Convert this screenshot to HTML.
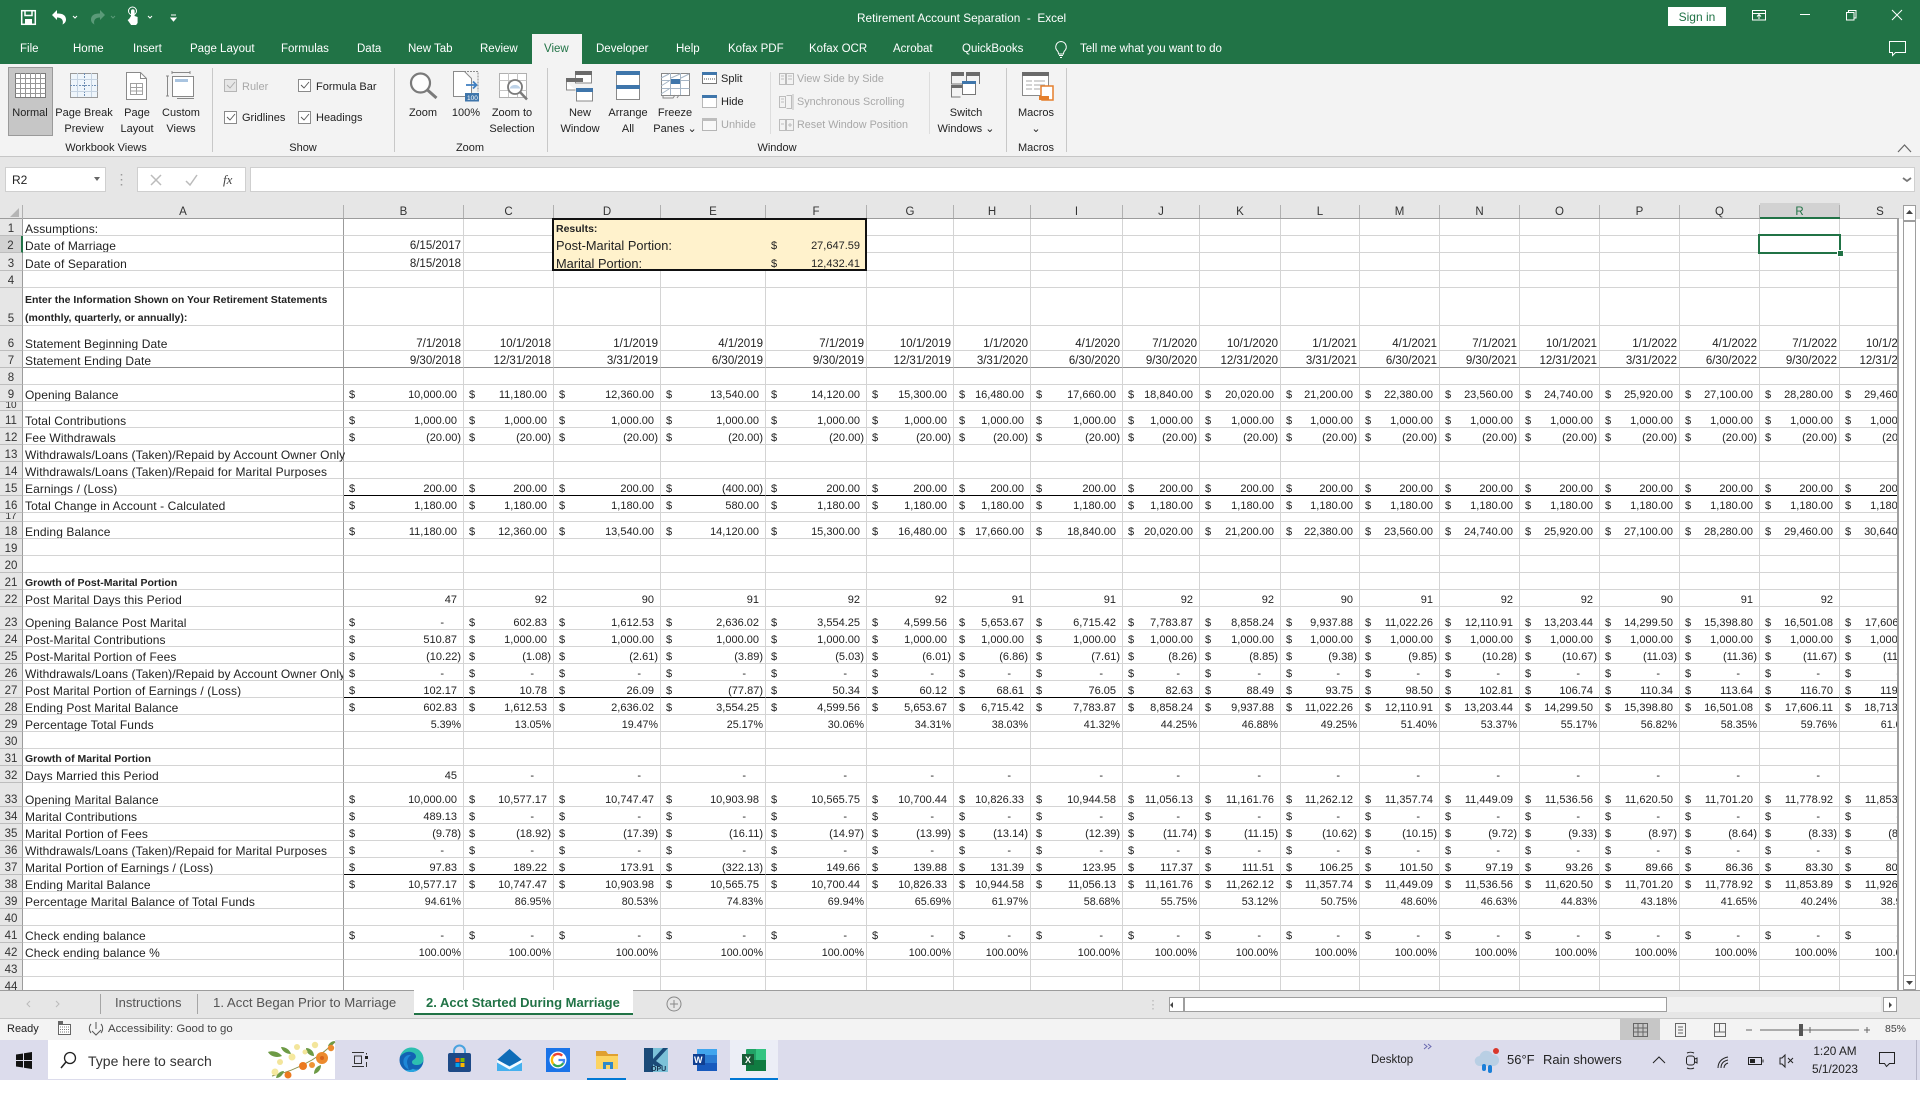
<!DOCTYPE html>
<html lang="en"><head><meta charset="utf-8"><title>Retirement Account Separation - Excel</title>
<style>
html,body{margin:0;padding:0;background:#fff}
body{width:1920px;height:1100px;position:relative;overflow:hidden;font-family:"Liberation Sans",sans-serif;color:#222}
.a,.t,.c{position:absolute}
.t,.c{white-space:nowrap;line-height:16px;font-size:11px}
.c{transform:translateX(-50%);text-align:center}
.w{color:#fff;font-size:11.5px}
.f{color:#a8a8a8}
.cb{position:absolute;width:11px;height:11px;border:1px solid #8a8a8a;background:#fff}
.sep{position:absolute;top:68px;width:1px;height:84px;background:#c8c8c8}
.ch{position:absolute;top:205px;height:13px;border-right:1px solid #b0b0b0;text-align:center;font-size:11.5px;line-height:14px;color:#333}
#g{position:absolute;left:0;top:219px;width:1899px;height:771px;overflow:hidden;background:#fff}
table{border-collapse:separate;border-spacing:0;table-layout:fixed;width:1920px}
td,th{box-sizing:border-box;padding:0;overflow:hidden;white-space:nowrap;vertical-align:bottom;line-height:12px;border-bottom:1px solid #d4d4d4}
td{border-right:1px solid #d4d4d4;text-align:right;padding:0 2px 0 5px;font-size:11px;color:#222}
th{background:#e6e6e6;border-right:1px solid #9c9c9c;border-bottom-color:#bdbdbd;font-weight:400;font-size:11.5px;color:#333;text-align:center}
td i{float:left;font-style:normal}
tr.n td{padding-right:6px}
tr.n td.p{padding-right:2px}
tr.n td.d{padding-right:19px}
tr.dt td{font-size:11.5px}
tr.pc td{font-size:10.7px}
tr td:nth-child(2),tr.dt td:nth-child(2),tr.pc td:nth-child(2){text-align:left;padding-left:2px;padding-right:0;font-size:12px;letter-spacing:.1px;border-right-color:#9b9b9b}
td b{font-size:10.5px;letter-spacing:0}
tr.g td{border-bottom-color:#8f8f8f}
tr.k td{border-bottom-color:#000}
tr.k td:nth-child(2){border-bottom-color:#d4d4d4}
td.y{background:#fff2cc;border-color:#fff2cc}
td.l,tr.dt td.l{text-align:left;font-size:12.8px;overflow:visible;padding-left:2px}
td.v,tr.dt td.v{font-size:11px;padding-right:6px}
td.o{overflow:visible}
.m{height:8px;line-height:8px;overflow:hidden;font-size:10px}
</style></head><body>

<!-- title bar + tabs -->
<div class="a" style="left:0;top:0;width:1920px;height:64px;background:#217346"></div>
<div class="a" style="left:532px;top:34px;width:50px;height:30px;background:#f3f3f3"></div>
<div class="t w" style="left:857px;top:10px;font-size:11.8px">Retirement Account Separation&nbsp; - &nbsp;Excel</div>
<div class="a" style="left:1668px;top:7px;width:58px;height:19px;background:#fff;color:#217346;font-size:12px;line-height:20px;text-align:center">Sign in</div>
<div class="t w" style="left:20px;top:41px">File</div>
<div class="t w" style="left:73px;top:41px">Home</div>
<div class="t w" style="left:133px;top:41px">Insert</div>
<div class="t w" style="left:190px;top:41px">Page Layout</div>
<div class="t w" style="left:281px;top:41px">Formulas</div>
<div class="t w" style="left:357px;top:41px">Data</div>
<div class="t w" style="left:408px;top:41px">New Tab</div>
<div class="t w" style="left:480px;top:41px">Review</div>
<div class="t" style="left:544px;top:41px;color:#217346;font-size:11.5px">View</div>
<div class="t w" style="left:596px;top:41px">Developer</div>
<div class="t w" style="left:676px;top:41px">Help</div>
<div class="t w" style="left:728px;top:41px">Kofax PDF</div>
<div class="t w" style="left:809px;top:41px">Kofax OCR</div>
<div class="t w" style="left:893px;top:41px">Acrobat</div>
<div class="t w" style="left:962px;top:41px">QuickBooks</div>
<div class="t w" style="left:1080px;top:41px">Tell me what you want to do</div>

<!-- ribbon -->
<div class="a" style="left:0;top:64px;width:1920px;height:92px;background:#f3f3f3;border-bottom:1px solid #c6c6c6"></div>
<div class="a" style="left:8px;top:67px;width:43px;height:67px;background:#c6c6c6;border:1px solid #9a9a9a"></div>
<div class="sep" style="left:212px"></div><div class="sep" style="left:394px"></div><div class="sep" style="left:547px"></div>
<div class="sep" style="left:770px;height:62px;top:72px;background:#ddd"></div><div class="sep" style="left:929px;height:62px;top:72px;background:#ddd"></div><div class="sep" style="left:1006px"></div><div class="sep" style="left:1066px"></div>

<div class="c" style="left:30px;top:105px">Normal</div>
<div class="c" style="left:84px;top:105px">Page Break<br>Preview</div>
<div class="c" style="left:137px;top:105px">Page<br>Layout</div>
<div class="c" style="left:181px;top:105px">Custom<br>Views</div>
<div class="c" style="left:106px;top:140px">Workbook Views</div>
<div class="t f" style="left:242px;top:79px">Ruler</div>
<div class="t" style="left:316px;top:79px">Formula Bar</div>
<div class="t" style="left:242px;top:110px">Gridlines</div>
<div class="t" style="left:316px;top:110px">Headings</div>
<div class="c" style="left:303px;top:140px">Show</div>
<div class="c" style="left:423px;top:105px">Zoom</div>
<div class="c" style="left:466px;top:105px">100%</div>
<div class="c" style="left:512px;top:105px">Zoom to<br>Selection</div>
<div class="c" style="left:470px;top:140px">Zoom</div>
<div class="c" style="left:580px;top:105px">New<br>Window</div>
<div class="c" style="left:628px;top:105px">Arrange<br>All</div>
<div class="c" style="left:675px;top:105px">Freeze<br>Panes&nbsp;⌄</div>
<div class="t" style="left:721px;top:71px">Split</div>
<div class="t" style="left:721px;top:94px">Hide</div>
<div class="t f" style="left:721px;top:117px">Unhide</div>
<div class="t f" style="left:797px;top:71px;font-size:10.8px">View Side by Side</div>
<div class="t f" style="left:797px;top:94px;font-size:10.8px">Synchronous Scrolling</div>
<div class="t f" style="left:797px;top:117px;font-size:10.8px">Reset Window Position</div>
<div class="c" style="left:777px;top:140px">Window</div>
<div class="c" style="left:966px;top:105px">Switch<br>Windows&nbsp;⌄</div>
<div class="c" style="left:1036px;top:105px">Macros<br>⌄</div>
<div class="c" style="left:1036px;top:140px">Macros</div>
<div class="cb" style="left:224px;top:79px;background:#e6e6e6;border-color:#b5b5b5"></div>
<div class="cb" style="left:298px;top:79px"></div><div class="cb" style="left:224px;top:111px"></div><div class="cb" style="left:298px;top:111px"></div>

<!-- formula band -->
<div class="a" style="left:0;top:157px;width:1920px;height:48px;background:#e6e6e6"></div>
<div class="a" style="left:5px;top:167px;width:101px;height:25px;background:#fff;border:1px solid #cfcfcf;box-sizing:border-box;font-size:12px;line-height:24px;padding-left:6px">R2</div>
<div class="a" style="left:137px;top:167px;width:109px;height:25px;background:#fff;border:1px solid #cfcfcf;box-sizing:border-box"></div>
<div class="a" style="left:250px;top:167px;width:1665px;height:25px;background:#fff;border:1px solid #cfcfcf;box-sizing:border-box"></div>
<div class="t" style="left:223px;top:172px;font-family:'Liberation Serif',serif;font-style:italic;font-size:13px;color:#444">fx</div>

<!-- column headers -->
<div class="a" style="left:0;top:203px;width:1920px;height:16px;background:#e6e6e6"></div>
<div class="a" style="left:1760px;top:203px;width:80px;height:15px;background:#d2d2d2"></div>
<div class="a" style="left:0;top:218px;width:1899px;height:1px;background:#9c9c9c"></div>
<div class="ch" style="left:23px;width:320px">A</div><div class="ch" style="left:344px;width:119px">B</div><div class="ch" style="left:464px;width:89px">C</div><div class="ch" style="left:554px;width:106px">D</div><div class="ch" style="left:661px;width:104px">E</div><div class="ch" style="left:766px;width:100px">F</div><div class="ch" style="left:867px;width:86px">G</div><div class="ch" style="left:954px;width:76px">H</div><div class="ch" style="left:1031px;width:91px">I</div><div class="ch" style="left:1123px;width:76px">J</div><div class="ch" style="left:1200px;width:80px">K</div><div class="ch" style="left:1281px;width:78px">L</div><div class="ch" style="left:1360px;width:79px">M</div><div class="ch" style="left:1440px;width:79px">N</div><div class="ch" style="left:1520px;width:79px">O</div><div class="ch" style="left:1600px;width:79px">P</div><div class="ch" style="left:1680px;width:79px">Q</div><div class="ch" style="left:1760px;width:79px;color:#217346">R</div><div class="ch" style="left:1840px;width:80px;border-right:0">S</div>
<div class="a" style="left:1760px;top:217px;width:80px;height:2px;background:#217346"></div>
<div class="a" style="left:22px;top:205px;width:1px;height:14px;background:#b0b0b0"></div>

<div id="g"><table>
<colgroup><col style="width:23px"><col style="width:321px"><col style="width:120px"><col style="width:90px"><col style="width:107px"><col style="width:105px"><col style="width:101px"><col style="width:87px"><col style="width:77px"><col style="width:92px"><col style="width:77px"><col style="width:81px"><col style="width:79px"><col style="width:80px"><col style="width:80px"><col style="width:80px"><col style="width:80px"><col style="width:80px"><col style="width:80px"><col style="width:80px"></colgroup>
<tr style="height:17px"><th>1<td>Assumptions:<td><td><td class="y l"><b>Results:</b><td class=y><td class=y><td><td><td><td><td><td><td><td><td><td><td><td><td>
<tr style="height:17px" class=dt><th style="background:#d2d2d2;border-right:2px solid #217346">2<td>Date of Marriage<td>6/15/2017<td><td class="y l">Post-Marital Portion:<td class=y><td class="y v"><i>$</i>27,647.59<td><td><td><td><td><td><td><td><td><td><td><td><td>
<tr style="height:18px" class=dt><th>3<td>Date of Separation<td>8/15/2018<td><td class="y l">Marital Portion:<td class=y><td class="y v"><i>$</i>12,432.41<td><td><td><td><td><td><td><td><td><td><td><td><td>
<tr style="height:17px"><th>4<td><td><td><td><td><td><td><td><td><td><td><td><td><td><td><td><td><td><td>
<tr style="height:38px"><th>5<td><div style="line-height:17px;position:relative;top:2px"><b>Enter the Information Shown on Your Retirement Statements<br>(monthly, quarterly, or annually):</b></div><td><td><td><td><td><td><td><td><td><td><td><td><td><td><td><td><td><td>
<tr style="height:25px" class=dt><th>6<td>Statement Beginning Date<td>7/1/2018<td>10/1/2018<td>1/1/2019<td>4/1/2019<td>7/1/2019<td>10/1/2019<td>1/1/2020<td>4/1/2020<td>7/1/2020<td>10/1/2020<td>1/1/2021<td>4/1/2021<td>7/1/2021<td>10/1/2021<td>1/1/2022<td>4/1/2022<td>7/1/2022<td>10/1/2022
<tr style="height:17px" class="dt g"><th>7<td>Statement Ending Date<td>9/30/2018<td>12/31/2018<td>3/31/2019<td>6/30/2019<td>9/30/2019<td>12/31/2019<td>3/31/2020<td>6/30/2020<td>9/30/2020<td>12/31/2020<td>3/31/2021<td>6/30/2021<td>9/30/2021<td>12/31/2021<td>3/31/2022<td>6/30/2022<td>9/30/2022<td>12/31/2022
<tr style="height:17px"><th>8<td><td><td><td><td><td><td><td><td><td><td><td><td><td><td><td><td><td><td>
<tr style="height:17px" class=n><th>9<td>Opening Balance<td><i>$</i>10,000.00<td><i>$</i>11,180.00<td><i>$</i>12,360.00<td><i>$</i>13,540.00<td><i>$</i>14,120.00<td><i>$</i>15,300.00<td><i>$</i>16,480.00<td><i>$</i>17,660.00<td><i>$</i>18,840.00<td><i>$</i>20,020.00<td><i>$</i>21,200.00<td><i>$</i>22,380.00<td><i>$</i>23,560.00<td><i>$</i>24,740.00<td><i>$</i>25,920.00<td><i>$</i>27,100.00<td><i>$</i>28,280.00<td><i>$</i>29,460.00
<tr style="height:9px"><th><div class=m>10</div><td><td><td><td><td><td><td><td><td><td><td><td><td><td><td><td><td><td><td>
<tr style="height:17px" class=n><th>11<td>Total Contributions<td><i>$</i>1,000.00<td><i>$</i>1,000.00<td><i>$</i>1,000.00<td><i>$</i>1,000.00<td><i>$</i>1,000.00<td><i>$</i>1,000.00<td><i>$</i>1,000.00<td><i>$</i>1,000.00<td><i>$</i>1,000.00<td><i>$</i>1,000.00<td><i>$</i>1,000.00<td><i>$</i>1,000.00<td><i>$</i>1,000.00<td><i>$</i>1,000.00<td><i>$</i>1,000.00<td><i>$</i>1,000.00<td><i>$</i>1,000.00<td><i>$</i>1,000.00
<tr style="height:17px" class=n><th>12<td>Fee Withdrawals<td class=p><i>$</i>(20.00)<td class=p><i>$</i>(20.00)<td class=p><i>$</i>(20.00)<td class=p><i>$</i>(20.00)<td class=p><i>$</i>(20.00)<td class=p><i>$</i>(20.00)<td class=p><i>$</i>(20.00)<td class=p><i>$</i>(20.00)<td class=p><i>$</i>(20.00)<td class=p><i>$</i>(20.00)<td class=p><i>$</i>(20.00)<td class=p><i>$</i>(20.00)<td class=p><i>$</i>(20.00)<td class=p><i>$</i>(20.00)<td class=p><i>$</i>(20.00)<td class=p><i>$</i>(20.00)<td class=p><i>$</i>(20.00)<td class=p><i>$</i>(20.00)
<tr style="height:17px"><th>13<td class=o>Withdrawals/Loans (Taken)/Repaid by Account Owner Only<td><td><td><td><td><td><td><td><td><td><td><td><td><td><td><td><td><td>
<tr style="height:17px"><th>14<td>Withdrawals/Loans (Taken)/Repaid for Marital Purposes<td><td><td><td><td><td><td><td><td><td><td><td><td><td><td><td><td><td>
<tr style="height:17px" class="n k"><th>15<td>Earnings / (Loss)<td><i>$</i>200.00<td><i>$</i>200.00<td><i>$</i>200.00<td class=p><i>$</i>(400.00)<td><i>$</i>200.00<td><i>$</i>200.00<td><i>$</i>200.00<td><i>$</i>200.00<td><i>$</i>200.00<td><i>$</i>200.00<td><i>$</i>200.00<td><i>$</i>200.00<td><i>$</i>200.00<td><i>$</i>200.00<td><i>$</i>200.00<td><i>$</i>200.00<td><i>$</i>200.00<td><i>$</i>200.00
<tr style="height:17px" class=n><th>16<td>Total Change in Account - Calculated<td><i>$</i>1,180.00<td><i>$</i>1,180.00<td><i>$</i>1,180.00<td><i>$</i>580.00<td><i>$</i>1,180.00<td><i>$</i>1,180.00<td><i>$</i>1,180.00<td><i>$</i>1,180.00<td><i>$</i>1,180.00<td><i>$</i>1,180.00<td><i>$</i>1,180.00<td><i>$</i>1,180.00<td><i>$</i>1,180.00<td><i>$</i>1,180.00<td><i>$</i>1,180.00<td><i>$</i>1,180.00<td><i>$</i>1,180.00<td><i>$</i>1,180.00
<tr style="height:9px"><th><div class=m>17</div><td><td><td><td><td><td><td><td><td><td><td><td><td><td><td><td><td><td><td>
<tr style="height:17px" class=n><th>18<td>Ending Balance<td><i>$</i>11,180.00<td><i>$</i>12,360.00<td><i>$</i>13,540.00<td><i>$</i>14,120.00<td><i>$</i>15,300.00<td><i>$</i>16,480.00<td><i>$</i>17,660.00<td><i>$</i>18,840.00<td><i>$</i>20,020.00<td><i>$</i>21,200.00<td><i>$</i>22,380.00<td><i>$</i>23,560.00<td><i>$</i>24,740.00<td><i>$</i>25,920.00<td><i>$</i>27,100.00<td><i>$</i>28,280.00<td><i>$</i>29,460.00<td><i>$</i>30,640.00
<tr style="height:17px"><th>19<td><td><td><td><td><td><td><td><td><td><td><td><td><td><td><td><td><td><td>
<tr style="height:17px"><th>20<td><td><td><td><td><td><td><td><td><td><td><td><td><td><td><td><td><td><td>
<tr style="height:17px"><th>21<td><b>Growth of Post-Marital Portion</b><td><td><td><td><td><td><td><td><td><td><td><td><td><td><td><td><td><td>
<tr style="height:17px" class=n><th>22<td>Post Marital Days this Period<td>47<td>92<td>90<td>91<td>92<td>92<td>91<td>91<td>92<td>92<td>90<td>91<td>92<td>92<td>90<td>91<td>92<td>
<tr style="height:23px" class=n><th>23<td>Opening Balance Post Marital<td class=d><i>$</i>-<td><i>$</i>602.83<td><i>$</i>1,612.53<td><i>$</i>2,636.02<td><i>$</i>3,554.25<td><i>$</i>4,599.56<td><i>$</i>5,653.67<td><i>$</i>6,715.42<td><i>$</i>7,783.87<td><i>$</i>8,858.24<td><i>$</i>9,937.88<td><i>$</i>11,022.26<td><i>$</i>12,110.91<td><i>$</i>13,203.44<td><i>$</i>14,299.50<td><i>$</i>15,398.80<td><i>$</i>16,501.08<td><i>$</i>17,606.11
<tr style="height:17px" class=n><th>24<td>Post-Marital Contributions<td><i>$</i>510.87<td><i>$</i>1,000.00<td><i>$</i>1,000.00<td><i>$</i>1,000.00<td><i>$</i>1,000.00<td><i>$</i>1,000.00<td><i>$</i>1,000.00<td><i>$</i>1,000.00<td><i>$</i>1,000.00<td><i>$</i>1,000.00<td><i>$</i>1,000.00<td><i>$</i>1,000.00<td><i>$</i>1,000.00<td><i>$</i>1,000.00<td><i>$</i>1,000.00<td><i>$</i>1,000.00<td><i>$</i>1,000.00<td><i>$</i>1,000.00
<tr style="height:17px" class=n><th>25<td>Post-Marital Portion of Fees<td class=p><i>$</i>(10.22)<td class=p><i>$</i>(1.08)<td class=p><i>$</i>(2.61)<td class=p><i>$</i>(3.89)<td class=p><i>$</i>(5.03)<td class=p><i>$</i>(6.01)<td class=p><i>$</i>(6.86)<td class=p><i>$</i>(7.61)<td class=p><i>$</i>(8.26)<td class=p><i>$</i>(8.85)<td class=p><i>$</i>(9.38)<td class=p><i>$</i>(9.85)<td class=p><i>$</i>(10.28)<td class=p><i>$</i>(10.67)<td class=p><i>$</i>(11.03)<td class=p><i>$</i>(11.36)<td class=p><i>$</i>(11.67)<td class=p><i>$</i>(11.95)
<tr style="height:17px" class=n><th>26<td>Withdrawals/Loans (Taken)/Repaid by Account Owner Only<td class=d><i>$</i>-<td class=d><i>$</i>-<td class=d><i>$</i>-<td class=d><i>$</i>-<td class=d><i>$</i>-<td class=d><i>$</i>-<td class=d><i>$</i>-<td class=d><i>$</i>-<td class=d><i>$</i>-<td class=d><i>$</i>-<td class=d><i>$</i>-<td class=d><i>$</i>-<td class=d><i>$</i>-<td class=d><i>$</i>-<td class=d><i>$</i>-<td class=d><i>$</i>-<td class=d><i>$</i>-<td class=d><i>$</i>-
<tr style="height:17px" class="n k"><th>27<td>Post Marital Portion of Earnings / (Loss)<td><i>$</i>102.17<td><i>$</i>10.78<td><i>$</i>26.09<td class=p><i>$</i>(77.87)<td><i>$</i>50.34<td><i>$</i>60.12<td><i>$</i>68.61<td><i>$</i>76.05<td><i>$</i>82.63<td><i>$</i>88.49<td><i>$</i>93.75<td><i>$</i>98.50<td><i>$</i>102.81<td><i>$</i>106.74<td><i>$</i>110.34<td><i>$</i>113.64<td><i>$</i>116.70<td><i>$</i>119.24
<tr style="height:17px" class=n><th>28<td>Ending Post Marital Balance<td><i>$</i>602.83<td><i>$</i>1,612.53<td><i>$</i>2,636.02<td><i>$</i>3,554.25<td><i>$</i>4,599.56<td><i>$</i>5,653.67<td><i>$</i>6,715.42<td><i>$</i>7,783.87<td><i>$</i>8,858.24<td><i>$</i>9,937.88<td><i>$</i>11,022.26<td><i>$</i>12,110.91<td><i>$</i>13,203.44<td><i>$</i>14,299.50<td><i>$</i>15,398.80<td><i>$</i>16,501.08<td><i>$</i>17,606.11<td><i>$</i>18,713.40
<tr style="height:17px" class=pc><th>29<td>Percentage Total Funds<td>5.39%<td>13.05%<td>19.47%<td>25.17%<td>30.06%<td>34.31%<td>38.03%<td>41.32%<td>44.25%<td>46.88%<td>49.25%<td>51.40%<td>53.37%<td>55.17%<td>56.82%<td>58.35%<td>59.76%<td>61.07%
<tr style="height:17px"><th>30<td><td><td><td><td><td><td><td><td><td><td><td><td><td><td><td><td><td><td>
<tr style="height:17px"><th>31<td><b>Growth of Marital Portion</b><td><td><td><td><td><td><td><td><td><td><td><td><td><td><td><td><td><td>
<tr style="height:17px" class=n><th>32<td>Days Married this Period<td>45<td class=d>-<td class=d>-<td class=d>-<td class=d>-<td class=d>-<td class=d>-<td class=d>-<td class=d>-<td class=d>-<td class=d>-<td class=d>-<td class=d>-<td class=d>-<td class=d>-<td class=d>-<td class=d>-<td>
<tr style="height:24px" class=n><th>33<td>Opening Marital Balance<td><i>$</i>10,000.00<td><i>$</i>10,577.17<td><i>$</i>10,747.47<td><i>$</i>10,903.98<td><i>$</i>10,565.75<td><i>$</i>10,700.44<td><i>$</i>10,826.33<td><i>$</i>10,944.58<td><i>$</i>11,056.13<td><i>$</i>11,161.76<td><i>$</i>11,262.12<td><i>$</i>11,357.74<td><i>$</i>11,449.09<td><i>$</i>11,536.56<td><i>$</i>11,620.50<td><i>$</i>11,701.20<td><i>$</i>11,778.92<td><i>$</i>11,853.89
<tr style="height:17px" class=n><th>34<td>Marital Contributions<td><i>$</i>489.13<td class=d><i>$</i>-<td class=d><i>$</i>-<td class=d><i>$</i>-<td class=d><i>$</i>-<td class=d><i>$</i>-<td class=d><i>$</i>-<td class=d><i>$</i>-<td class=d><i>$</i>-<td class=d><i>$</i>-<td class=d><i>$</i>-<td class=d><i>$</i>-<td class=d><i>$</i>-<td class=d><i>$</i>-<td class=d><i>$</i>-<td class=d><i>$</i>-<td class=d><i>$</i>-<td class=d><i>$</i>-
<tr style="height:17px" class=n><th>35<td>Marital Portion of Fees<td class=p><i>$</i>(9.78)<td class=p><i>$</i>(18.92)<td class=p><i>$</i>(17.39)<td class=p><i>$</i>(16.11)<td class=p><i>$</i>(14.97)<td class=p><i>$</i>(13.99)<td class=p><i>$</i>(13.14)<td class=p><i>$</i>(12.39)<td class=p><i>$</i>(11.74)<td class=p><i>$</i>(11.15)<td class=p><i>$</i>(10.62)<td class=p><i>$</i>(10.15)<td class=p><i>$</i>(9.72)<td class=p><i>$</i>(9.33)<td class=p><i>$</i>(8.97)<td class=p><i>$</i>(8.64)<td class=p><i>$</i>(8.33)<td class=p><i>$</i>(8.05)
<tr style="height:17px" class=n><th>36<td>Withdrawals/Loans (Taken)/Repaid for Marital Purposes<td class=d><i>$</i>-<td class=d><i>$</i>-<td class=d><i>$</i>-<td class=d><i>$</i>-<td class=d><i>$</i>-<td class=d><i>$</i>-<td class=d><i>$</i>-<td class=d><i>$</i>-<td class=d><i>$</i>-<td class=d><i>$</i>-<td class=d><i>$</i>-<td class=d><i>$</i>-<td class=d><i>$</i>-<td class=d><i>$</i>-<td class=d><i>$</i>-<td class=d><i>$</i>-<td class=d><i>$</i>-<td class=d><i>$</i>-
<tr style="height:17px" class="n k"><th>37<td>Marital Portion of Earnings / (Loss)<td><i>$</i>97.83<td><i>$</i>189.22<td><i>$</i>173.91<td class=p><i>$</i>(322.13)<td><i>$</i>149.66<td><i>$</i>139.88<td><i>$</i>131.39<td><i>$</i>123.95<td><i>$</i>117.37<td><i>$</i>111.51<td><i>$</i>106.25<td><i>$</i>101.50<td><i>$</i>97.19<td><i>$</i>93.26<td><i>$</i>89.66<td><i>$</i>86.36<td><i>$</i>83.30<td><i>$</i>80.60
<tr style="height:17px" class=n><th>38<td>Ending Marital Balance<td><i>$</i>10,577.17<td><i>$</i>10,747.47<td><i>$</i>10,903.98<td><i>$</i>10,565.75<td><i>$</i>10,700.44<td><i>$</i>10,826.33<td><i>$</i>10,944.58<td><i>$</i>11,056.13<td><i>$</i>11,161.76<td><i>$</i>11,262.12<td><i>$</i>11,357.74<td><i>$</i>11,449.09<td><i>$</i>11,536.56<td><i>$</i>11,620.50<td><i>$</i>11,701.20<td><i>$</i>11,778.92<td><i>$</i>11,853.89<td><i>$</i>11,926.44
<tr style="height:17px" class=pc><th>39<td>Percentage Marital Balance of Total Funds<td>94.61%<td>86.95%<td>80.53%<td>74.83%<td>69.94%<td>65.69%<td>61.97%<td>58.68%<td>55.75%<td>53.12%<td>50.75%<td>48.60%<td>46.63%<td>44.83%<td>43.18%<td>41.65%<td>40.24%<td>38.93%
<tr style="height:17px"><th>40<td><td><td><td><td><td><td><td><td><td><td><td><td><td><td><td><td><td><td>
<tr style="height:17px" class=n><th>41<td>Check ending balance<td class=d><i>$</i>-<td class=d><i>$</i>-<td class=d><i>$</i>-<td class=d><i>$</i>-<td class=d><i>$</i>-<td class=d><i>$</i>-<td class=d><i>$</i>-<td class=d><i>$</i>-<td class=d><i>$</i>-<td class=d><i>$</i>-<td class=d><i>$</i>-<td class=d><i>$</i>-<td class=d><i>$</i>-<td class=d><i>$</i>-<td class=d><i>$</i>-<td class=d><i>$</i>-<td class=d><i>$</i>-<td class=d><i>$</i>-
<tr style="height:17px" class=pc><th>42<td>Check ending balance %<td>100.00%<td>100.00%<td>100.00%<td>100.00%<td>100.00%<td>100.00%<td>100.00%<td>100.00%<td>100.00%<td>100.00%<td>100.00%<td>100.00%<td>100.00%<td>100.00%<td>100.00%<td>100.00%<td>100.00%<td>100.00%
<tr style="height:17px"><th>43<td><td><td><td><td><td><td><td><td><td><td><td><td><td><td><td><td><td><td>
<tr style="height:17px"><th>44<td><td><td><td><td><td><td><td><td><td><td><td><td><td><td><td><td><td><td>
</table></div>

<!-- grid overlays -->
<div class="a" style="left:552px;top:218px;width:315px;height:53px;border:2px solid #111;box-sizing:border-box"></div>
<div class="a" style="left:1758px;top:234px;width:83px;height:20px;border:2px solid #217346;box-sizing:border-box"></div>
<div class="a" style="left:1837px;top:250px;width:5px;height:5px;background:#217346;border:1px solid #fff"></div>
<div class="a" style="left:1899px;top:219px;width:21px;height:771px;background:#fff"></div>
<div class="a" style="left:1897px;top:219px;width:2px;height:771px;background:#a0a0a0"></div>
<div class="a" style="left:1903px;top:205px;width:13px;height:785px;border:1px solid #9e9e9e;box-sizing:border-box;background:#fff"></div>
<div class="a" style="left:1903px;top:220px;width:13px;height:2px;background:#9e9e9e"></div>
<div class="a" style="left:1903px;top:975px;width:13px;height:1px;background:#9e9e9e"></div>

<!-- sheet tab bar -->
<div class="a" style="left:0;top:990px;width:1920px;height:28px;background:#e6e6e6;border-top:1px solid #9c9c9c;box-sizing:border-box"></div>
<div class="a" style="left:100px;top:994px;width:1px;height:20px;background:#a5a5a5"></div>
<div class="a" style="left:197px;top:994px;width:1px;height:20px;background:#a5a5a5"></div>
<div class="a" style="left:414px;top:990px;width:219px;height:25px;background:#fff;border-bottom:2px solid #217346;box-sizing:border-box"></div>
<div class="t" style="left:115px;top:995px;font-size:13px;color:#555">Instructions</div>
<div class="t" style="left:213px;top:995px;font-size:13.200px;color:#555">1. Acct Began Prior to Marriage</div>
<div class="t" style="left:426px;top:995px;font-size:13px;font-weight:700;color:#217346">2. Acct Started During Marriage</div>
<div class="a" style="left:1169px;top:997px;width:15px;height:15px;background:#fff;border:1px solid #9e9e9e;box-sizing:border-box"></div>
<div class="a" style="left:1184px;top:997px;width:483px;height:15px;background:#fff;border:1px solid #9e9e9e;box-sizing:border-box"></div>
<div class="a" style="left:1667px;top:997px;width:214px;height:15px;background:#f0f0f0"></div>
<div class="a" style="left:1883px;top:997px;width:14px;height:15px;background:#fff;border:1px solid #9e9e9e;box-sizing:border-box"></div>

<!-- status bar -->
<div class="a" style="left:0;top:1018px;width:1920px;height:22px;background:#f3f3f3;border-top:1px solid #c6c6c6;box-sizing:border-box"></div>
<div class="t" style="left:7px;top:1021px">Ready</div>
<div class="t" style="left:108px;top:1021px;font-size:11.4px;color:#444">Accessibility: Good to go</div>
<div class="a" style="left:1620px;top:1019px;width:40px;height:21px;background:#c6c6c6"></div>
<div class="t" style="left:1885px;top:1021px;font-size:10.5px;color:#444">85%</div>

<!-- taskbar -->
<div class="a" style="left:0;top:1040px;width:1920px;height:40px;background:#dcdcec"></div>
<div class="a" style="left:48px;top:1040px;width:287px;height:39px;background:#fff"></div>
<div class="t" style="left:88px;top:1053px;font-size:14px;color:#333">Type here to search</div>
<div class="a" style="left:730px;top:1040px;width:48px;height:40px;background:#eceef6"></div>
<div class="a" style="left:587px;top:1078px;width:39px;height:2px;background:#0078d4"></div>
<div class="a" style="left:730px;top:1078px;width:48px;height:2px;background:#0078d4"></div>
<div class="a" style="left:1916px;top:1040px;width:1px;height:40px;background:#b5b5c8"></div>
<div class="t" style="left:1371px;top:1052px;font-size:11.5px">Desktop</div>
<div class="t" style="left:1507px;top:1052px;font-size:13px">56°F</div>
<div class="t" style="left:1543px;top:1052px;font-size:13px">Rain showers</div>
<div class="c" style="left:1835px;top:1043px;font-size:11.800px">1:20 AM</div>
<div class="c" style="left:1835px;top:1061px;font-size:11.800px">5/1/2023</div>

<!-- icons -->
<svg class="a" style="left:0;top:0;pointer-events:none" width="1920" height="1100" viewBox="0 0 1920 1100" fill="none">
<!-- QAT -->
<g stroke="#fff" stroke-width="1.5"><rect x="21.7" y="10.7" width="13.6" height="13.6"/><path d="M25 11v4.5h7V11"/></g><rect x="25" y="19" width="7" height="5.5" fill="#fff"/>
<path d="M52 15l5-5v3.5c5-.3 9 1.5 9 6 0 2.5-1.500 4-3.500 5 1-2.500.5-7-5.500-7V20z" fill="#fff"/>
<path d="M105 15l-5-5v3.500c-5-.3-9 1.500-9 6 0 2.500 1.500 4 3.500 5-1-2.500-.5-7 5.500-7V20z" fill="#5a9a78"/>
<path d="M131 16v-5a1.800 1.800 0 013.600 0v5l3 1v6l-1.500 2h-5l-3.500-5 1.500-1z" fill="#fff"/><circle cx="132.500" cy="11" r="4" stroke="#fff"/>
<g stroke="#fff"><path d="M73 16l2 2 2-2M148 16l2 2 2-2"/><path d="M171 15h5M171 18l2.500 3 2.500-3z" fill="#fff"/></g><path d="M111 16l2 2 2-2" stroke="#5a9a78"/>
<!-- window ctl -->
<g stroke="#fff"><rect x="1752.500" y="10.500" width="13" height="9.500"/><path d="M1752.500 13.500h13M1759 19v-4.500M1757 16.500l2-2 2 2"/><path d="M1800 14.500h10"/><rect x="1846.500" y="12.500" width="7.500" height="7.500"/><path d="M1848.500 12.500v-2h7.500v7.500h-2"/><path d="M1892 10l10 10M1902 10l-10 10"/><path d="M1889.500 41.500h16v11h-10l-3 3v-3h-3z"/></g>
<path d="M1061 41.500a5.500 5.500 0 00-3.500 9.500c1 1 1 2 1 3h5c0-1 0-2 1-3a5.500 5.500 0 00-3.500-9.500zM1059 55.500h4M1060 57.500h2" stroke="#fff"/>
<path d="M1898 152l6.500-7 6.500 7" stroke="#666" stroke-width="1.200"/>
<!-- normal -->
<path d="M15.500 73.500h30v24h-30z" fill="#fff" stroke="#7a7a7a"/><path d="M15.500 78.500h30M15.500 83.500h30M15.500 88.500h30M15.500 93.500h30M20.500 73v24M25.500 73v24M30.500 73v24M35.500 73v24M40.500 73v24" stroke="#969696"/>
<!-- page break -->
<path d="M70.500 73.500h27v24h-27z" fill="#eef5fb" stroke="#9a9a9a"/><path d="M70 85.500h28" stroke="#6f8fb5" stroke-dasharray="2 1"/><path d="M84.500 73v24" stroke="#6f8fb5" stroke-dasharray="2 1"/><path d="M70.500 79.500h27M70.500 91.500h27M77.500 73v24M91.500 73v24" stroke="#c5d3e2"/>
<!-- page layout -->
<path d="M126.500 72.500h14l6 6v21h-20z" fill="#fff" stroke="#8a8a8a"/><path d="M140.500 72.500v6h6" stroke="#8a8a8a"/><path d="M130.500 83.500h12v11h-12zM130.500 87.500h12M130.500 91h12M136.500 83.500v11" stroke="#a0a0a0"/>
<!-- custom views -->
<path d="M172.500 76.500h21v20h-21z" fill="#fff" stroke="#888"/><rect x="175" y="79" width="13" height="3" fill="#a9c4e0"/><path d="M167.500 76v20M166 76h3M166 96h3M172 72.500h18M172 71v3M190 71v3M177 98.500h17" stroke="#888"/>
<!-- checks -->
<g stroke="#555" stroke-width=".9"><path d="M301 85l3 3 5-6M227 117l3 3 5-6M301 117l3 3 5-6"/></g><path d="M227 85l3 3 5-6" stroke="#aaa" stroke-width=".9"/>
<!-- zoom -->
<circle cx="420.500" cy="83" r="9.500" stroke="#7a7a7a" stroke-width="2.200" fill="#fdfdfd"/><path d="M427.500 90l9 8" stroke="#7a7a7a" stroke-width="3"/>
<path d="M453.500 71.500h11l7 7v18h-18z" fill="#fff" stroke="#8a8a8a"/><path d="M464 71.500h14v20" stroke="#8a8a8a" stroke-dasharray="2 1"/><path d="M466 85h10m-3-3.500l3.500 3.500-3.500 3.500" stroke="#3f7fc1" stroke-width="1.800"/><rect x="465" y="93" width="14" height="8.500" fill="#3f76ab"/><text x="467" y="100" font-family="Liberation Sans,sans-serif" font-size="6.500" fill="#fff">100</text>
<path d="M499.500 73.500h27v24h-27z" fill="#fff" stroke="#b0b0b0"/><path d="M499.500 80.500h27M508.500 73v24M517.500 73v24M499.500 90.500h27" stroke="#c4c4c4"/><circle cx="515" cy="87" r="7" fill="#fff" stroke="#7a7a7a" stroke-width="1.800"/><path d="M509.500 88.500a6 6 0 0111 0z" fill="#bcd2e8"/><path d="M520 92l7 7.500" stroke="#7a7a7a" stroke-width="2.500"/>
<!-- new window -->
<rect x="575" y="71" width="17" height="4" fill="#6b6b6b"/><path d="M575.500 75v8h16v-8" stroke="#888" fill="#fff"/><rect x="566" y="78" width="17" height="4" fill="#6b6b6b"/><path d="M566.500 82v8h9" stroke="#888" fill="#fff"/><rect x="576" y="88" width="17" height="4" fill="#3f76ab"/><path d="M576.500 92v9h16v-9" stroke="#888" fill="#fff"/>
<!-- arrange all -->
<rect x="616.500" y="71.500" width="23" height="28" fill="#fff" stroke="#888"/><rect x="616" y="71" width="24" height="4" fill="#3f76ab"/><rect x="616" y="85" width="24" height="4" fill="#3f76ab"/>
<!-- freeze -->
<rect x="661.500" y="73.500" width="28" height="22" fill="#fff" stroke="#888"/><path d="M661.500 80.500h28M661.500 88.500h28M670.500 73v22M680.500 73v22M661 78l8-4M661 86l8-5M661 94l8-5M671 78l9-4M681 78l8-4" stroke="#a5b5c5"/><rect x="671" y="79" width="9" height="5" fill="#3f76ab"/><path d="M663 95v3h10l2-3M679 95l-2 3" stroke="#888"/>
<!-- split hide unhide -->
<rect x="702.500" y="72.500" width="14" height="11" fill="#fff" stroke="#777"/><rect x="702" y="72" width="15" height="3" fill="#3f76ab"/><path d="M704 79h11" stroke="#555" stroke-dasharray="1 1"/>
<rect x="702.500" y="95.500" width="14" height="12" fill="#fff" stroke="#777" stroke-dasharray="1 1"/><rect x="702" y="95" width="15" height="3" fill="#3f76ab"/>
<rect x="702.500" y="118.500" width="14" height="12" fill="#f8f8f8" stroke="#b5b5b5"/><rect x="702" y="118" width="15" height="3" fill="#bdbdbd"/>
<g stroke="#bcbcbc"><path d="M779.500 73.500h6v11h-6zM786.500 73.500h7v11h-7zM781 76h3M788 76h4M781 79h3M788 79h4"/><path d="M779.500 96.500h6v11h-6zM786.500 95.500h5v13h-5M781 99h3M781 102h3M793 94v16"/><path d="M779.500 119.500h6v11h-6zM786.500 119.500h7v11h-7zM781 124h3M788 125h4M790 123v4"/></g>
<!-- switch windows -->
<rect x="951" y="72" width="13" height="4" fill="#6b6b6b"/><rect x="966" y="72" width="14" height="4" fill="#6b6b6b"/><path d="M951.500 76v8h12M966.500 76v5M979.500 76v8" stroke="#777"/><rect x="951" y="85" width="11" height="3" fill="#6b6b6b"/><path d="M951.500 88v9h9" stroke="#777"/><rect x="962.500" y="81.500" width="13" height="13" fill="#fff" stroke="#777"/><rect x="962" y="81" width="14" height="3" fill="#3f76ab"/>
<!-- macros -->
<rect x="1022.500" y="72.500" width="26" height="23" fill="#fff" stroke="#8a8a8a"/><rect x="1022" y="72" width="27" height="4" fill="#6b6b6b"/><path d="M1026 81h6M1034 81h11M1026 85h6M1034 85h11M1026 89h6M1034 89h6" stroke="#aaa"/><path d="M1041 86h12v14h-11v-3h-1z" fill="#fff" stroke="#e57f2c" stroke-width="1.500"/><rect x="1039" y="96" width="10" height="4" fill="#e57f2c"/>
<!-- formula bar icons -->
<path d="M94 177h6l-3 4z" fill="#666"/><path d="M121.500 174v1.500M121.500 179v1.500M121.500 184v1.500" stroke="#999" stroke-width="1.500"/>
<path d="M151 175l10 10M161 175l-10 10" stroke="#bbb" stroke-width="1.500"/><path d="M186 181l4 4 7-10" stroke="#bbb" stroke-width="1.500"/><path d="M1903 178l4 3 4-3" stroke="#777" stroke-width="1.800"/>
<path d="M19 208v9h-9z" fill="#b5b5b5"/>
<!-- scroll arrows -->
<path d="M1906 214h7l-3.500-4zM1906 981h7l-3.500 4zM1173 1002v6l-3-3zM1889 1002v6l3-3z" fill="#444"/>
<path d="M30 1001l-3 3 3 3M56 1001l3 3-3 3" stroke="#bbb"/>
<circle cx="674" cy="1004" r="7" stroke="#888"/><path d="M670 1004h8M674 1000v8" stroke="#888"/>
<path d="M1153 1000v1.500M1153 1004v1.500M1153 1008v1.500" stroke="#aaa"/>
<!-- status icons -->
<rect x="58.500" y="1024.500" width="12" height="10" stroke="#666" fill="#fff"/><rect x="58" y="1021" width="5" height="3" fill="#666"/><path d="M60 1027h9M60 1029.500h9M60 1032h9" stroke="#777" stroke-dasharray="1 1"/>
<path d="M91 1033a7 7 0 010-9M101 1024a7 7 0 010 9M96 1022v7M92 1031l4 4 5-5" stroke="#555"/>
<g stroke="#666"><path d="M1633.500 1023.500h14v13h-14zM1633.500 1028h14M1633.500 1032h14M1638 1023.500v13M1643 1023.500v13"/><path d="M1675.500 1023.500h10v13h-10zM1678 1027h5M1678 1030h5M1678 1033h5"/><path d="M1714.500 1023.500h11v13h-11zM1714.500 1032h11M1719.500 1023.500v8"/><path d="M1746 1030h6M1760 1030h99M1864 1030h6M1867 1027v6M1810 1027v6"/></g><rect x="1799" y="1024" width="4" height="12" fill="#555"/>
<!-- taskbar icons -->
<path d="M16 1054.500l7-1v6.500h-7zM24 1053.300l8-1.300v8h-8zM16 1061h7v6.500l-7-1zM24 1061h8v8l-8-1.300z" fill="#111"/>
<circle cx="70" cy="1058" r="5.500" stroke="#222" stroke-width="1.300"/><path d="M66 1062l-5 6" stroke="#222" stroke-width="1.500"/>
<g stroke="#333"><path d="M352 1052.500h12M352 1066.500h12M354.500 1056h7v7.500h-7z"/><path d="M366.500 1053v1.500M366.500 1062v5" /></g><rect x="365" y="1056" width="3" height="3" fill="#222"/>
<!-- flowers -->
<g><path d="M272 1076c14-3 28-9 40-16 8-5 15-10 23-18" stroke="#8a8f4a"/>
<path d="M268 1052c5-2 11 0 14 4-5 2-11 1-14-4zM281 1047c5 0 9 3 10 7-5 0-9-3-10-7zM306 1048c4 0 8 3 8 8-4 0-8-3-8-8zM314 1074c0-5 3-8 7-9 0 5-3 8-7 9zM276 1078c1-4 4-7 8-7-1 4-4 7-8 7zM328 1046c1-3 4-5 7-5-1 3-4 5-7 5z" fill="#6d9a45"/>
<circle cx="297" cy="1047" r="3" fill="#f3e59b"/><circle cx="315" cy="1045" r="3.200" fill="#f3e59b"/><circle cx="292" cy="1057" r="3.500" fill="#f5e89e"/><circle cx="305" cy="1052" r="2.500" fill="#f3e59b"/><circle cx="275" cy="1072" r="3.500" fill="#f5e89e"/><circle cx="280" cy="1062" r="3" fill="#f3e59b"/>
<circle cx="322" cy="1058" r="6" fill="#ec8a2e"/><circle cx="322" cy="1058" r="2" fill="#d8641a"/><circle cx="303" cy="1066" r="4" fill="#ec7a20"/><circle cx="312" cy="1065" r="3" fill="#ef9436"/><circle cx="288" cy="1075" r="3.500" fill="#ec7a20"/><circle cx="331" cy="1048" r="3.200" fill="#ec8a2e"/></g>
<!-- edge -->
<circle cx="411.500" cy="1060" r="12" fill="#1262b3"/>
<path d="M400 1057c1.500-6 6-9.500 11.500-9.500 7 0 12 5.500 12 11.500 0 4-3 6-6.500 6-3 0-5-1-5-3 0-2.500 4-2.500 4-5.500 0-3.500-5-5.500-9-4.500-3.500 1-6 3-7 5z" fill="#2dbfb0"/>
<path d="M423 1063c-1.500 5-6 9-11.500 9-3 0-5-.8-7-2.300 3 .8 6 .5 8.500-1 1 .8 3 1 5 .8 2.500-.5 4-3 5-6.500z" fill="#2aa6e0"/>
<path d="M408 1066c-2-4-1-8 3-11-4-.5-7 2-7.500 5.500-.5 4 1.500 7.500 6 9.500-1-1-1.500-2.500-1.500-4z" fill="#1d86d6"/>
<!-- store -->
<rect x="448" y="1053" width="23" height="19" rx="2" fill="#1e4a87"/><path d="M454 1053v-2a5.500 5.500 0 0111 0v2" stroke="#4aa3df" stroke-width="2"/><rect x="455.500" y="1058" width="4" height="4" fill="#f25022"/><rect x="460.500" y="1058" width="4" height="4" fill="#7fba00"/><rect x="455.500" y="1063" width="4" height="4" fill="#00a4ef"/><rect x="460.500" y="1063" width="4" height="4" fill="#ffb900"/>
<!-- mail -->
<path d="M497 1060l12.500-11 12.500 11v11h-25z" fill="#45b0ee"/><path d="M497 1060l12.500-11 12.500 11-12.500 6z" fill="#0f6cb7"/><path d="M497 1059.500l12.500 7 12.500-7v3l-12.500 7-12.500-7z" fill="#f4fbff"/>
<!-- google -->
<rect x="546" y="1048" width="24" height="24" fill="#1a73e8"/><circle cx="558" cy="1060" r="8.500" fill="#fff"/><g stroke-width="2.300"><path d="M553.400 1056a6 6 0 018.800-.3" stroke="#ea4335"/><path d="M553.400 1056a6 6 0 000 8" stroke="#fbbc05"/><path d="M553.400 1064a6 6 0 009.800-1" stroke="#34a853"/><path d="M563.500 1063c.6-1 .5-2.500.5-3h-5.500" stroke="#4285f4"/></g>
<!-- explorer -->
<path d="M596 1051h10l2 3h10v6h-22z" fill="#e0a030"/><rect x="596" y="1056" width="22" height="13" fill="#fcd462"/><rect x="603" y="1062" width="10" height="7" fill="#2f88c8"/><rect x="606" y="1065" width="4" height="4" fill="#fcd462"/>
<!-- kopu -->
<rect x="644" y="1048" width="24" height="24" fill="#7cc1d8"/><path d="M644 1048h9v11l10-11h5l-12 13 7 5h-8l-2-2v8h-9z" fill="#1b4a78"/><text x="651" y="1071" font-family="Liberation Sans,sans-serif" font-size="7" font-weight="700" fill="#17324f">OPU</text>
<!-- word -->
<rect x="697" y="1049" width="20" height="22" rx="1" fill="#2b7cd3"/><rect x="697" y="1049" width="20" height="6" fill="#41a5ee"/><rect x="697" y="1063" width="20" height="8" fill="#185abd"/><rect x="693" y="1054" width="12" height="11" fill="#103f91"/><text x="694" y="1063" font-family="Liberation Sans,sans-serif" font-size="9" font-weight="700" fill="#fff">W</text>
<!-- excel -->
<rect x="746" y="1049" width="20" height="22" rx="1" fill="#21a366"/><rect x="746" y="1060" width="20" height="11" fill="#107c41"/><rect x="756" y="1049" width="10" height="11" fill="#33c481"/><rect x="742" y="1054" width="12" height="11" fill="#185c37"/><text x="745" y="1063" font-family="Liberation Sans,sans-serif" font-size="9" font-weight="700" fill="#fff">X</text>
<!-- tray -->
<path d="M1424 1044l3 2.500-3 2.500M1428 1044l3 2.500-3 2.500" stroke="#6a6ab0"/>
<path d="M1480 1066a5 5 0 01-.5-10 7 7 0 0113-1.500 5.500 5.500 0 011.500 11.500z" fill="#b9cfe4"/><circle cx="1496" cy="1051" r="3" fill="#d9372b"/><path d="M1484 1066v3M1490 1067v4" stroke="#1a7fd8" stroke-width="4" stroke-linecap="round"/>
<g stroke="#222"><path d="M1653 1063l6-6 6 6"/><rect x="1686.500" y="1056" width="8" height="9" rx="2.500"/><path d="M1695 1059l2-1v5l-2-1"/><path d="M1687 1053c2-1 5-1 7 0M1687 1068c2 1 5 1 7 0"/><path d="M1718 1068c0-6 4-10 10-11M1721 1068c0-4 2-7 7-8M1724 1068c0-2 1-4 4-5"/><path d="M1748.500 1057.500h13v7h-13zM1763 1059.500v3"/><path d="M1780 1058h2l3-3v12l-3-3h-2zM1788 1058l5 5M1793 1058l-5 5"/><path d="M1879.500 1052.500h15v11h-5l-3 3-2-3h-5z"/></g><rect x="1750" y="1059" width="5" height="4" fill="#222"/>
</svg>
</body></html>
